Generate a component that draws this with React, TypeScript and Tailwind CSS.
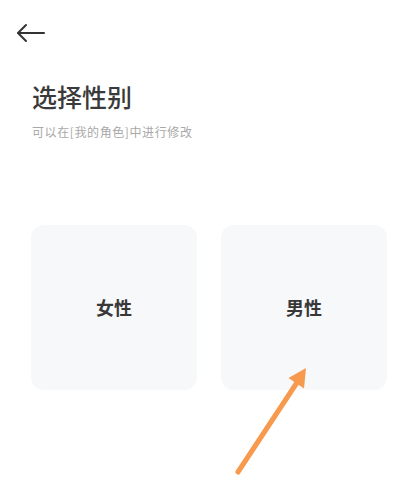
import React from "react";

export default function App() {
  return (
    <div
      className="relative w-[420px] h-[500px] bg-white overflow-hidden"
      style={{ fontFamily: '"Noto Sans CJK SC", "Noto Sans", sans-serif' }}
    >
      <div className="pt-[23px] pl-[16px]">
        <svg width="29" height="20" viewBox="0 0 29 20" fill="none">
          <path d="M28 10H2.5" stroke="#333333" strokeWidth="2" strokeLinecap="round" />
          <path d="M10 2L2 10L10 18" stroke="#333333" strokeWidth="2" strokeLinecap="round" strokeLinejoin="round" />
        </svg>
      </div>
      <div className="pl-[32px] pt-[37px]">
        <h1 className="text-[25px] leading-[32px] font-medium text-[#3a3a3a]">选择性别</h1>
        <p className="mt-[12px] text-[12px] leading-[16px] tracking-[0.6px] text-[#a8a8a8]">可以在[我的角色]中进行修改</p>
      </div>
      <div className="flex gap-[24px] pl-[31px] pt-[85px]">
        <div className="w-[166px] h-[165px] rounded-[13px] bg-[#f7f8fa] flex items-center justify-center">
          <span className="text-[18px] font-bold text-[#383838]">女性</span>
        </div>
        <div className="w-[166px] h-[165px] rounded-[13px] bg-[#f7f8fa] flex items-center justify-center">
          <span className="text-[18px] font-bold text-[#383838]">男性</span>
        </div>
      </div>
      <svg className="absolute left-0 top-0 pointer-events-none" width="420" height="500" viewBox="0 0 420 500">
        <line x1="238" y1="472" x2="298" y2="381" stroke="#f79a4e" strokeWidth="5" strokeLinecap="round" />
        <polygon points="306,368 304,388.5 288.5,378" fill="#f79a4e" />
      </svg>
    </div>
  );
}
